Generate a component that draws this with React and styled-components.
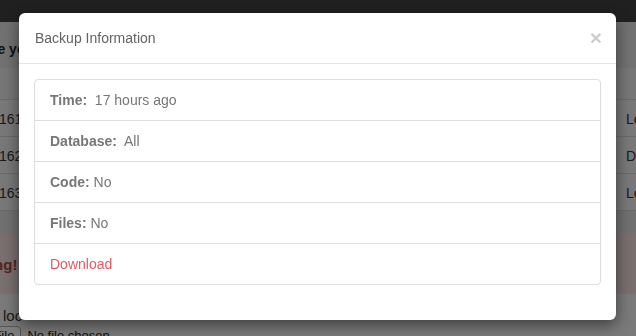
import React from "react";
import styled, { createGlobalStyle } from "styled-components";

const Global = createGlobalStyle`
  html, body { margin: 0; padding: 0; }
  body {
    width: 636px; height: 336px; overflow: hidden;
    font-family: "Liberation Sans", Arial, Helvetica, sans-serif;
    font-size: 14px; color: #333; background: #f4f4f4;
  }
`;

const Page = styled.div`
  display: flex; flex-direction: column; height: 336px; overflow: hidden;
`;
const Navbar = styled.div`
  height: 22px; background: #404040; flex: none;
`;
const Heading = styled.div`
  height: 46px; background: #e2e2e2; display: flex; align-items: center;
  padding-top: 8px; box-sizing: border-box; flex: none;
  font-weight: bold; font-size: 14px; color: #222; white-space: nowrap;
  margin-left: -8px;
`;
const Table = styled.div`
  display: flex; flex-direction: column; background: #f0f0f0; flex: none;
`;
const HeadRow = styled.div`
  height: 32px; border-bottom: 1px solid #d4d4d4; background: #ececec;
  box-sizing: border-box;
`;
const Row = styled.div`
  height: 37px; border-bottom: 1px solid #d4d4d4; display: flex;
  align-items: center; justify-content: space-between; white-space: nowrap;
  color: #333; font-size: 14px; padding-top: 2px; box-sizing: border-box;
  margin-left: -1px;
`;
const RightCell = styled.span`
  width: 10px; overflow: hidden; display: inline-block;
`;
const Gap = styled.div`
  height: 22px; background: #e0e0e0; flex: none;
`;
const Alert = styled.div`
  height: 61px; background: #f2dede; color: #a94442; font-weight: bold; flex: none;
  display: flex; align-items: center; white-space: nowrap;
  font-size: 15px; margin-left: -47px; padding-top: 2px; box-sizing: border-box;
`;
const Note = styled.div`
  padding: 13px 0 0 3px; font-size: 15px; color: #333; white-space: nowrap; flex: none;
`;
const FileLine = styled.div`
  display: flex; align-items: center; gap: 6px; margin-top: 2px; margin-left: -62px;
  font-size: 13px; color: #222; flex: none; white-space: nowrap;
`;
const FileBtn = styled.span`
  border: 1px solid #aaa; border-radius: 4px; padding: 1px 6px; background: #fafafa;
`;

const Backdrop = styled.div`
  position: fixed; inset: 0; background: rgba(0,0,0,0.5);
`;

const Modal = styled.div`
  position: fixed; left: 19px; top: 13px; width: 597px;
  background: #fff; border-radius: 6px;
  box-shadow: 0 5px 15px rgba(0,0,0,0.5);
  overflow: hidden;
`;
const Header = styled.div`
  display: flex; align-items: center; justify-content: space-between;
  padding: 15px 15px 15px 16px; border-bottom: 1px solid #e5e5e5;
`;
const Title = styled.h4`
  margin: 0; font-size: 14px; font-weight: normal; color: #636363; line-height: 20px;
`;
const Close = styled.span`
  font-size: 21px; font-weight: bold; line-height: 20px; color: #000; opacity: 0.2;
  margin-right: -1px;
`;
const Body = styled.div`
  padding: 15px;
`;
const ListGroup = styled.ul`
  list-style: none; margin: 0 0 20px; padding: 0;
`;
const Item = styled.li`
  padding: 10px 15px; line-height: 20px; border: 1px solid #dddddd;
  margin-bottom: -1px; color: #777; font-size: 14px;
  &:first-child { border-top-left-radius: 4px; border-top-right-radius: 4px; }
  &:last-child { border-bottom-left-radius: 4px; border-bottom-right-radius: 4px; margin-bottom: 0; }
`;
const Label = styled.b`
  font-weight: bold; color: #777;
`;
const Link = styled.a`
  color: #ee5661; text-decoration: none;
`;

export default function App() {
  const rows = [
    ["1610", "Local"],
    ["1620", "Dropbox"],
    ["1630", "Local"],
  ];
  return (
    <>
      <Global />
      <Page>
        <Navbar />
        <Heading>re your backups</Heading>
        <Table>
          <HeadRow />
          {rows.map(([a, b]) => (
            <Row key={a}>
              <span>{a}</span>
              <RightCell>{b}</RightCell>
            </Row>
          ))}
        </Table>
        <Gap />
        <Alert>Warning!</Alert>
        <Note>loc</Note>
        <FileLine>
          <FileBtn>Choose File</FileBtn>
          <span>No file chosen</span>
        </FileLine>
      </Page>
      <Backdrop />
      <Modal>
        <Header>
          <Title>Backup Information</Title>
          <Close>×</Close>
        </Header>
        <Body>
          <ListGroup>
            <Item><Label>Time:</Label>&nbsp; 17 hours ago</Item>
            <Item><Label>Database:</Label>&nbsp; All</Item>
            <Item><Label>Code:</Label> No</Item>
            <Item><Label>Files:</Label> No</Item>
            <Item><Link href="#">Download</Link></Item>
          </ListGroup>
        </Body>
      </Modal>
    </>
  );
}
